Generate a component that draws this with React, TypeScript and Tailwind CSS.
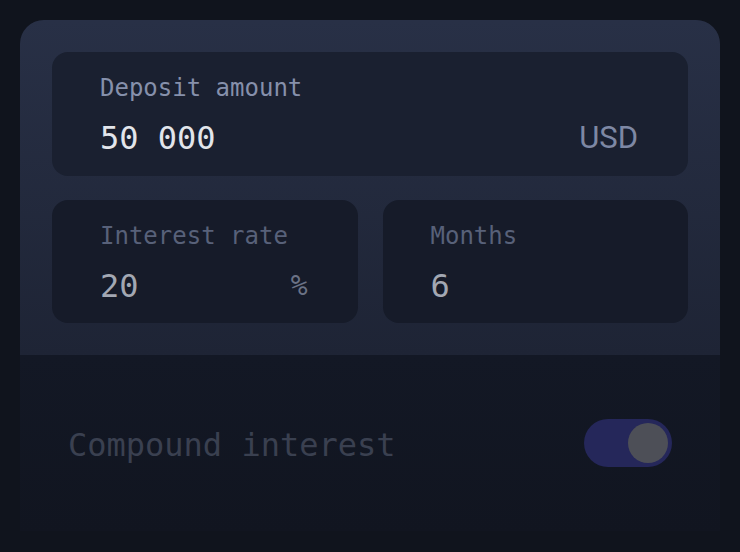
import React from 'react';

const mono = "font-['DejaVu_Sans_Mono','Liberation_Mono',monospace]";

const SmallField = ({ label, value, unit }: { label: string; value: string; unit?: string }) => (
  <div className="flex-1 h-[123px] rounded-2xl bg-[#161b29] px-12 pt-[22px]">
    <div className={`${mono} text-[24px] leading-[28px] text-[#586179]`}>{label}</div>
    <div className="mt-[16px] flex items-center justify-between">
      <span className={`${mono} text-[32px] leading-[40px] text-[#a3a8b3]`}>{value}</span>
      {unit && <span className={`${mono} text-[28px] leading-[40px] text-[#6b7285] mr-[2px]`}>{unit}</span>}
    </div>
  </div>
);

const App = () => {
  return (
    <div className="w-[740px] h-[552px] overflow-hidden bg-[#10141d] px-5 pt-5">
      <div className="rounded-t-[24px] overflow-hidden bg-[#121724]">
        <div className="bg-gradient-to-b from-[#283046] to-[#1e2435] p-8 flex flex-col gap-6">
          <div className="h-[124px] rounded-2xl bg-[#1a2030] pl-12 pr-[50px] pt-[22px]">
            <div className={`${mono} text-[24px] leading-[28px] text-[#8690ab]`}>Deposit amount</div>
            <div className="mt-[16px] flex items-center justify-between">
              <span className={`${mono} text-[32px] leading-[40px] text-[#e2e5eb]`}>50 000</span>
              <span className="font-['Roboto',sans-serif] text-[31px] leading-[40px] text-[#7e88a4]">USD</span>
            </div>
          </div>
          <div className="flex gap-[25px]">
            <SmallField label="Interest rate" value="20" unit="%" />
            <SmallField label="Months" value="6" />
          </div>
        </div>
        <div className="bg-gradient-to-b from-[#131825] to-[#111520] px-12 pt-16 pb-16 flex items-center justify-between">
          <span className={`${mono} text-[32px] leading-[48px] text-[#3a4050] translate-y-[2px]`}>Compound interest</span>
          <div className="w-[88px] h-12 rounded-full bg-[#25275a] flex items-center justify-end pr-1">
            <div className="w-10 h-10 rounded-full bg-[#4d4f57]" />
          </div>
        </div>
      </div>
    </div>
  );
};

export default App;
